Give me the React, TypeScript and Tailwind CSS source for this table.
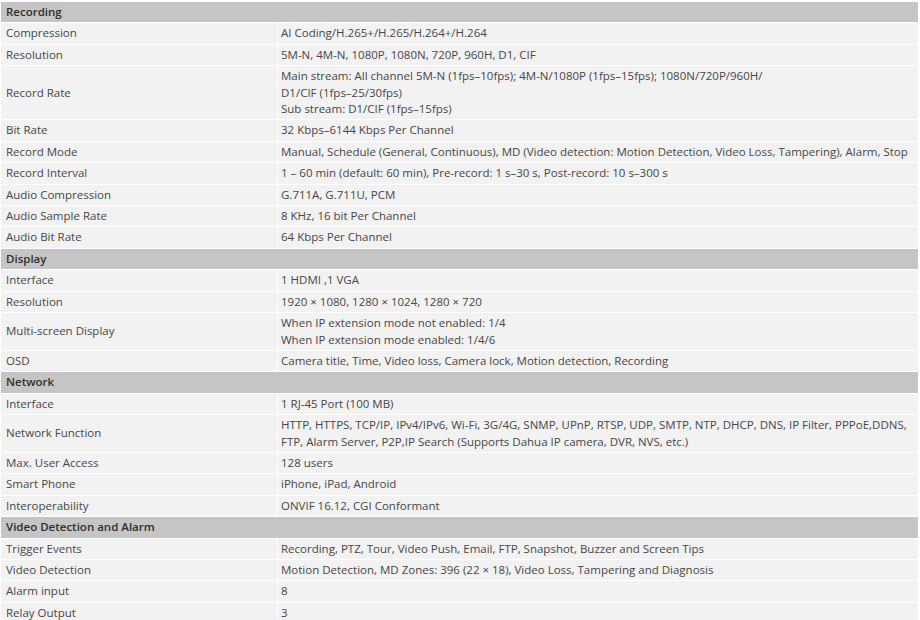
type Row = { label: string; value: string[] } | { section: string }

const rows: Row[] = [
  { section: 'Recording' },
  { label: 'Compression', value: ['AI Coding/H.265+/H.265/H.264+/H.264'] },
  { label: 'Resolution', value: ['5M-N, 4M-N, 1080P, 1080N, 720P, 960H, D1, CIF'] },
  {
    label: 'Record Rate',
    value: [
      'Main stream: All channel 5M-N (1fps–10fps); 4M-N/1080P (1fps–15fps); 1080N/720P/960H/',
      'D1/CIF (1fps–25/30fps)',
      'Sub stream: D1/CIF (1fps–15fps)',
    ],
  },
  { label: 'Bit Rate', value: ['32 Kbps–6144 Kbps Per Channel'] },
  {
    label: 'Record Mode',
    value: ['Manual, Schedule (General, Continuous), MD (Video detection: Motion Detection, Video Loss, Tampering), Alarm, Stop'],
  },
  { label: 'Record Interval', value: ['1 – 60 min (default: 60 min), Pre-record: 1 s–30 s, Post-record: 10 s–300 s'] },
  { label: 'Audio Compression', value: ['G.711A, G.711U, PCM'] },
  { label: 'Audio Sample Rate', value: ['8 KHz, 16 bit Per Channel'] },
  { label: 'Audio Bit Rate', value: ['64 Kbps Per Channel'] },
  { section: 'Display' },
  { label: 'Interface', value: ['1 HDMI ,1 VGA'] },
  { label: 'Resolution', value: ['1920 × 1080, 1280 × 1024, 1280 × 720'] },
  {
    label: 'Multi-screen Display',
    value: ['When IP extension mode not enabled: 1/4', 'When IP extension mode enabled: 1/4/6'],
  },
  { label: 'OSD', value: ['Camera title, Time, Video loss, Camera lock, Motion detection, Recording'] },
  { section: 'Network' },
  { label: 'Interface', value: ['1 RJ-45 Port (100 MB)'] },
  {
    label: 'Network Function',
    value: [
      'HTTP, HTTPS, TCP/IP, IPv4/IPv6, Wi-Fi, 3G/4G, SNMP, UPnP, RTSP, UDP, SMTP, NTP, DHCP, DNS, IP Filter, PPPoE,DDNS,',
      'FTP, Alarm Server, P2P,IP Search (Supports Dahua IP camera, DVR, NVS, etc.)',
    ],
  },
  { label: 'Max. User Access', value: ['128 users'] },
  { label: 'Smart Phone', value: ['iPhone, iPad, Android'] },
  { label: 'Interoperability', value: ['ONVIF 16.12, CGI Conformant'] },
  { section: 'Video Detection and Alarm' },
  { label: 'Trigger Events', value: ['Recording, PTZ, Tour, Video Push, Email, FTP, Snapshot, Buzzer and Screen Tips'] },
  { label: 'Video Detection', value: ['Motion Detection, MD Zones: 396 (22 × 18), Video Loss, Tampering and Diagnosis'] },
  { label: 'Alarm input', value: ['8'] },
  { label: 'Relay Output', value: ['3'] },
]

export default function App() {
  return (
    <div className="h-[620px] w-[920px] overflow-hidden bg-white pl-[1px] pr-[2px] pt-[2px] font-['Open_Sans',sans-serif] text-[11.5px] leading-[16.4px] text-[#464646]">
      <div className="flex flex-col gap-[1px]">
        {rows.map((row, i) =>
          'section' in row ? (
            <div key={i} className="bg-[#c4c5c4] px-[5px] py-[2px] font-semibold text-[#2e2e2e]">
              {row.section}
            </div>
          ) : (
            <div key={i} className="flex gap-[1px]">
              <div className="flex w-[276px] shrink-0 items-center bg-[#f2f2f2] px-[5px] py-[2px]">
                {row.label}
              </div>
              <div className="flex-1 whitespace-nowrap bg-[#f2f2f2] px-[3px] py-[2px]">
                {row.value.map((line, j) => (
                  <div key={j}>{line}</div>
                ))}
              </div>
            </div>
          ),
        )}
      </div>
    </div>
  )
}
